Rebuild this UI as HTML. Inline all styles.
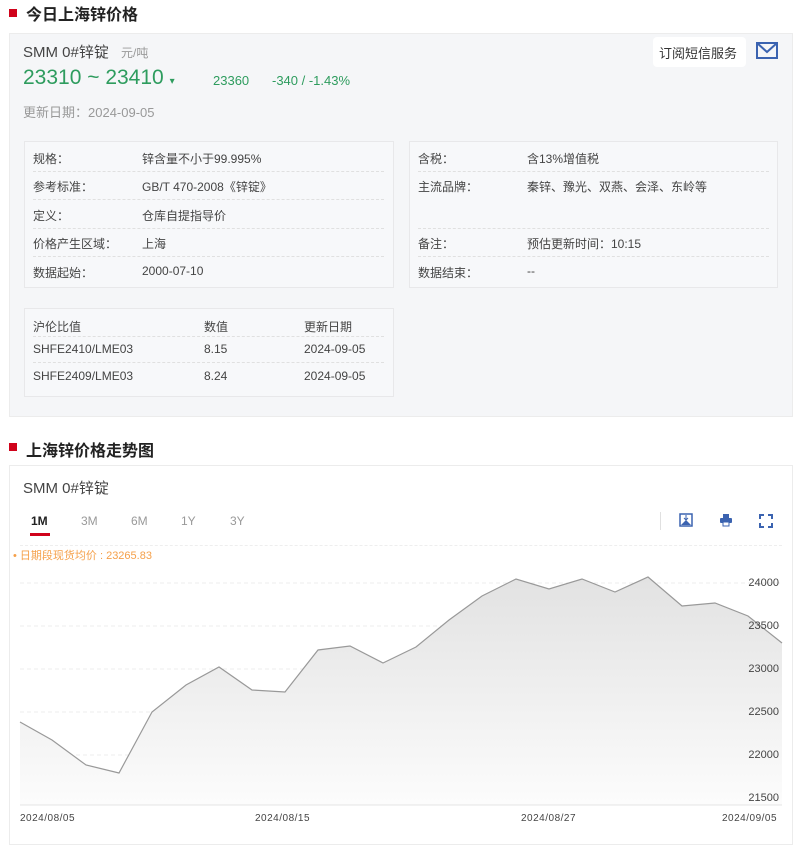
<!DOCTYPE html>
<html><head><meta charset="utf-8"><style>
*{margin:0;padding:0;box-sizing:border-box}
body{width:800px;height:834px;overflow:hidden;background:#fff;font-family:"Liberation Sans","Noto Sans CJK SC",sans-serif;color:#333;position:relative}
.a{position:absolute;white-space:nowrap}
.h{font-size:16px;font-weight:bold;color:#222}
.sq{position:absolute;width:8px;height:8px;background:#d0021b}
.box{position:absolute;border:1px solid #e8e8ea;background:#f7f8fa}
.t{font-size:12px;color:#444}
.dl{position:absolute;height:0;border-top:1px dashed #e0e0e0}
.tab{font-size:12px;color:#999}
.y{font-size:11px;color:#444;right:21px}
.x{font-size:10px;color:#444;top:813px;letter-spacing:.5px}
</style></head><body>
<div class="sq" style="left:9px;top:9px"></div>
<div class="a h" style="left:26px;top:1px">今日上海锌价格</div>
<div class="box" style="left:9px;top:33px;width:784px;height:384px;background:#f5f6f8;border-color:#ececec"></div>
<div class="a" style="left:23px;top:41px;font-size:15px;color:#444">SMM 0#锌锭 <span style="font-size:12px;color:#999;margin-left:8px">元/吨</span></div>
<div class="a" style="left:23px;top:66px;font-size:21px;color:#2e9c5e">23310 ~ 23410 <span style="font-size:10px">▾</span></div>
<div class="a" style="left:213px;top:73px;font-size:13px;color:#2e9c5e">23360</div>
<div class="a" style="left:272px;top:73px;font-size:13px;color:#2e9c5e">-340 / -1.43%</div>
<div class="a" style="left:23px;top:102px;font-size:13px;color:#999">更新日期：2024-09-05</div>
<div class="a" style="left:653px;top:37px;width:93px;height:30px;background:#fff;border-radius:4px"></div>
<div class="a" style="left:659px;top:43px;font-size:13px;color:#333">订阅短信服务</div>
<svg class="a" style="left:756px;top:42px" width="22" height="17"><rect x="1" y="1" width="20" height="15" fill="none" stroke="#3b63b0" stroke-width="2"/><path d="M1 1 L11 10 L21 1" fill="none" stroke="#3b63b0" stroke-width="2"/></svg>

<div class="box" style="left:24px;top:141px;width:370px;height:147px"></div>
<div class="box" style="left:409px;top:141px;width:369px;height:147px"></div>
<div class="box" style="left:24px;top:308px;width:370px;height:89px"></div>
<div class="a t" style="left:33px;top:150px">规格：</div><div class="a t" style="left:142px;top:150px">锌含量不小于99.995%</div>
<div class="dl" style="left:33px;top:171px;width:351px"></div>
<div class="a t" style="left:33px;top:178px">参考标准：</div><div class="a t" style="left:142px;top:178px">GB/T 470-2008《锌锭》</div>
<div class="dl" style="left:33px;top:199px;width:351px"></div>
<div class="a t" style="left:33px;top:207px">定义：</div><div class="a t" style="left:142px;top:207px">仓库自提指导价</div>
<div class="dl" style="left:33px;top:228px;width:351px"></div>
<div class="a t" style="left:33px;top:235px">价格产生区域：</div><div class="a t" style="left:142px;top:235px">上海</div>
<div class="dl" style="left:33px;top:256px;width:351px"></div>
<div class="a t" style="left:33px;top:264px">数据起始：</div><div class="a t" style="left:142px;top:264px">2000-07-10</div>

<div class="a t" style="left:418px;top:150px">含税：</div><div class="a t" style="left:527px;top:150px">含13%增值税</div>
<div class="dl" style="left:418px;top:171px;width:351px"></div>
<div class="a t" style="left:418px;top:178px">主流品牌：</div><div class="a t" style="left:527px;top:178px">秦锌、豫光、双燕、会泽、东岭等</div>
<div class="dl" style="left:418px;top:228px;width:351px"></div>
<div class="a t" style="left:418px;top:235px">备注：</div><div class="a t" style="left:527px;top:235px">预估更新时间：10:15</div>
<div class="dl" style="left:418px;top:256px;width:351px"></div>
<div class="a t" style="left:418px;top:264px">数据结束：</div><div class="a t" style="left:527px;top:264px">--</div>

<div class="a t" style="left:33px;top:318px">沪伦比值</div><div class="a t" style="left:204px;top:318px">数值</div><div class="a t" style="left:304px;top:318px">更新日期</div>
<div class="dl" style="left:33px;top:336px;width:351px"></div>
<div class="a t" style="left:33px;top:342px">SHFE2410/LME03</div><div class="a t" style="left:204px;top:342px">8.15</div><div class="a t" style="left:304px;top:342px">2024-09-05</div>
<div class="dl" style="left:33px;top:362px;width:351px"></div>
<div class="a t" style="left:33px;top:369px">SHFE2409/LME03</div><div class="a t" style="left:204px;top:369px">8.24</div><div class="a t" style="left:304px;top:369px">2024-09-05</div>

<div class="sq" style="left:9px;top:443px"></div>
<div class="a h" style="left:26px;top:437px">上海锌价格走势图</div>
<div class="a" style="left:9px;top:465px;width:784px;height:380px;border:1px solid #ececec"></div>
<div class="a" style="left:23px;top:477px;font-size:15px;color:#444">SMM 0#锌锭</div>
<div class="a tab" style="left:31px;top:514px;color:#222;font-weight:bold">1M</div>
<div class="a" style="left:30px;top:533px;width:20px;height:3px;background:#d0021b"></div>
<div class="a tab" style="left:81px;top:514px">3M</div>
<div class="a tab" style="left:131px;top:514px">6M</div>
<div class="a tab" style="left:181px;top:514px">1Y</div>
<div class="a tab" style="left:230px;top:514px">3Y</div>
<div class="a" style="left:660px;top:512px;width:1px;height:18px;background:#e0e0e0"></div>
<svg class="a" style="left:679px;top:513px" width="14" height="14"><rect x="1" y="1" width="12" height="12" fill="none" stroke="#3b63b0" stroke-width="1.5"/><path d="M2 12 L7 7 L12 12Z" fill="#3b63b0"/><path d="M7 2 V7 M5 5 L7 7 L9 5" stroke="#3b63b0" fill="none"/></svg>
<svg class="a" style="left:719px;top:513px" width="14" height="14"><rect x="4" y="1" width="6" height="4" fill="#3b63b0"/><rect x="1" y="5" width="12" height="5" rx="1" fill="#3b63b0"/><rect x="4" y="9" width="6" height="4" fill="#fff" stroke="#3b63b0"/></svg>
<svg class="a" style="left:759px;top:514px" width="14" height="14" fill="none" stroke="#3b63b0" stroke-width="2"><path d="M1 5V1H5M9 1H13V5M13 9V13H9M5 13H1V9"/></svg>
<div class="dl" style="left:20px;top:545px;width:762px;border-color:#eee"></div>
<div class="a" style="left:13px;top:547px;font-size:11px;color:#f5a04a">• 日期段现货均价 : 23265.83</div>
<svg class="a" style="left:0;top:560px" width="800" height="260">
<defs><linearGradient id="g" x1="0" y1="0" x2="0" y2="1"><stop offset="0" stop-color="#e2e2e2"/><stop offset="1" stop-color="#fcfcfc"/></linearGradient></defs>
<g stroke="#eee" stroke-dasharray="4 3"><line x1="20" y1="23" x2="782" y2="23"/><line x1="20" y1="66" x2="782" y2="66"/><line x1="20" y1="109" x2="782" y2="109"/><line x1="20" y1="152" x2="782" y2="152"/><line x1="20" y1="195" x2="782" y2="195"/></g>
<path d="M20 162 L52 180 L86 205 L119 213 L152 152 L186 125 L219 107 L252 130 L285 132 L318 90 L350 86 L383 103 L416 87 L449 60 L482 36 L516 19 L549 29 L582 19 L615 32 L648 17 L682 46 L715 43 L748 56 L782 83 L782 245 L20 245Z" fill="url(#g)"/>
<path d="M20 162 L52 180 L86 205 L119 213 L152 152 L186 125 L219 107 L252 130 L285 132 L318 90 L350 86 L383 103 L416 87 L449 60 L482 36 L516 19 L549 29 L582 19 L615 32 L648 17 L682 46 L715 43 L748 56 L782 83" fill="none" stroke="#999" stroke-width="1.2"/>
<line x1="20" y1="245" x2="782" y2="245" stroke="#e4e4e4"/>
</svg>
<div class="a y" style="top:577px">24000</div>
<div class="a y" style="top:620px">23500</div>
<div class="a y" style="top:663px">23000</div>
<div class="a y" style="top:706px">22500</div>
<div class="a y" style="top:749px">22000</div>
<div class="a y" style="top:792px">21500</div>
<div class="a x" style="left:20px">2024/08/05</div>
<div class="a x" style="left:255px">2024/08/15</div>
<div class="a x" style="left:521px">2024/08/27</div>
<div class="a x" style="left:722px">2024/09/05</div>
</body></html>
